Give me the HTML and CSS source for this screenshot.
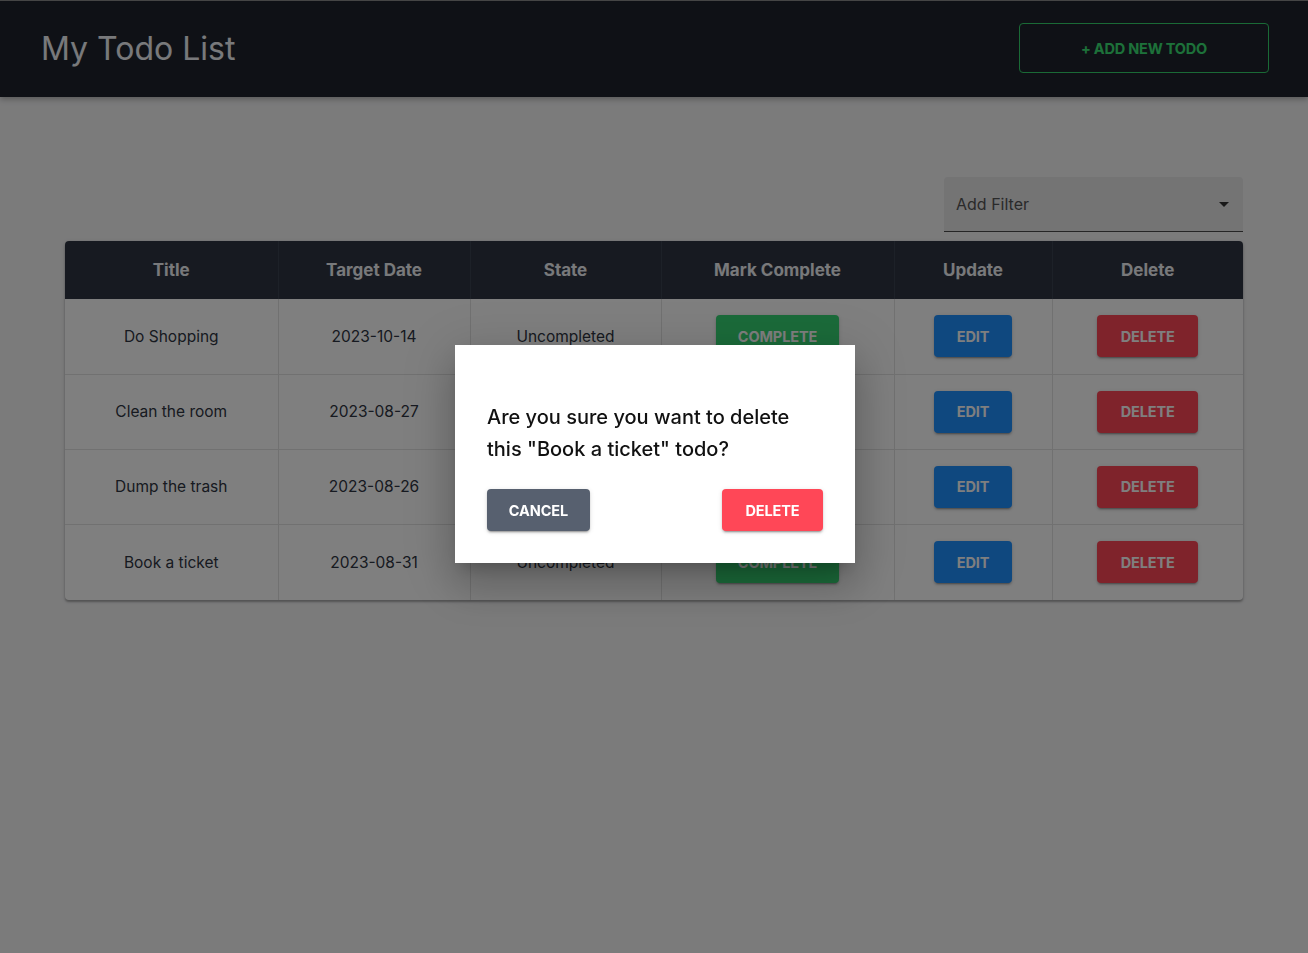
FILE: index.html
```html
<!DOCTYPE html>
<html>
<head>
<meta charset="utf-8">
<title>My Todo List</title>
<link rel="stylesheet" href="styles.css">
</head>
<body>
<header class="navbar">
  <h1 class="brand">My Todo List</h1>
  <button class="btn-outline">+ ADD NEW TODO</button>
</header>
<main class="content">
  <div class="filter-row">
    <div class="filter">
      <span class="filter-label">Add Filter</span>
      <svg class="caret" width="10" height="5" viewBox="0 0 10 5"><path d="M0 0 L10 0 L5 5 Z" fill="#333"/></svg>
    </div>
  </div>
  <div class="table-wrap">
    <table class="todo-table">
      <colgroup>
        <col style="width:213px"><col style="width:192px"><col style="width:191px"><col style="width:233px"><col style="width:158px"><col style="width:191px">
      </colgroup>
      <thead>
        <tr><th>Title</th><th>Target Date</th><th>State</th><th>Mark Complete</th><th>Update</th><th>Delete</th></tr>
      </thead>
      <tbody>
        <tr><td>Do Shopping</td><td>2023-10-14</td><td>Uncompleted</td><td><button class="btn btn-green">COMPLETE</button></td><td><button class="btn btn-blue">EDIT</button></td><td><button class="btn btn-red">DELETE</button></td></tr>
        <tr><td>Clean the room</td><td>2023-08-27</td><td>Uncompleted</td><td><button class="btn btn-green">COMPLETE</button></td><td><button class="btn btn-blue">EDIT</button></td><td><button class="btn btn-red">DELETE</button></td></tr>
        <tr><td>Dump the trash</td><td>2023-08-26</td><td>Uncompleted</td><td><button class="btn btn-green">COMPLETE</button></td><td><button class="btn btn-blue">EDIT</button></td><td><button class="btn btn-red">DELETE</button></td></tr>
        <tr><td>Book a ticket</td><td>2023-08-31</td><td>Uncompleted</td><td><button class="btn btn-green">COMPLETE</button></td><td><button class="btn btn-blue">EDIT</button></td><td><button class="btn btn-red">DELETE</button></td></tr>
      </tbody>
    </table>
  </div>
</main>
<div class="backdrop"></div>
<div class="modal">
  <p class="modal-text">Are you sure you want to delete this "Book a ticket" todo?</p>
  <div class="modal-actions">
    <button class="btn btn-gray">CANCEL</button>
    <button class="btn btn-red modal-del">DELETE</button>
  </div>
</div>
</body>
</html>
```
FILE: styles.css
```css
* { box-sizing: border-box; }
html, body { margin: 0; padding: 0; }
body {
  background: #f6f6f7;
  font-family: Inter, "Noto Sans", "Liberation Sans", sans-serif;
  color: #2f3542;
  min-height: 953px;
}
.navbar {
  height: 97px;
  background: #1e232d;
  border-top: 1px solid #8a8a8a;
  display: flex;
  align-items: center;
  justify-content: space-between;
  padding: 0 39px 0 41px;
  box-shadow: 0 2px 6px rgba(0,0,0,0.3);
}
.brand {
  margin: 0 0 2px 0;
  font-weight: 400;
  font-size: 32px;
  color: #f1f2f6;
  letter-spacing: 0;
}
.btn-outline {
  width: 250px;
  height: 50px;
  background: transparent;
  border: 1px solid #34d46c;
  border-radius: 4px;
  color: #3ae374;
  font-family: inherit;
  font-weight: 700;
  font-size: 14.5px;
  letter-spacing: -0.2px;
  margin-top: -2px;
}
.content {
  padding: 80px 65px 0 65px;
}
.filter-row {
  display: flex;
  justify-content: flex-end;
}
.filter {
  width: 299px;
  height: 55px;
  background: #e8e8e9;
  border-bottom: 1px solid #4a4a4a;
  border-radius: 4px 4px 0 0;
  display: flex;
  align-items: center;
  justify-content: space-between;
  padding: 0 14px 0 12px;
}
.filter-label {
  font-size: 16px;
  color: #555;
}
.table-wrap {
  margin-top: 9px;
  border-radius: 4px;
  overflow: hidden;
  background: #fff;
  box-shadow: 0 2px 2px rgba(0,0,0,0.25), 0 1px 4px rgba(0,0,0,0.15);
}
.todo-table {
  width: 100%;
  border-collapse: collapse;
  table-layout: fixed;
}
.todo-table th {
  height: 58px;
  background: #2f3542;
  color: #f1f2f6;
  font-size: 17px;
  font-weight: 700;
  text-align: center;
  border-right: 1px solid #3b4250;
}
.todo-table td {
  height: 75px;
  text-align: center;
  font-size: 15.5px;
  color: #2f3542;
  border-right: 1px solid #e2e2e2;
  border-top: 1px solid #e2e2e2;
}
.todo-table tbody tr:first-child td { border-top: none; }
.todo-table tbody tr:last-child td { height: 76px; }
.todo-table th:last-child, .todo-table td:last-child { border-right: none; }
.btn {
  height: 42px;
  border: none;
  border-radius: 4px;
  color: #fff;
  font-family: inherit;
  font-weight: 700;
  font-size: 14.5px;
  letter-spacing: -0.1px;
  box-shadow: 0 3px 1px -2px rgba(0,0,0,0.2), 0 2px 2px rgba(0,0,0,0.14), 0 1px 5px rgba(0,0,0,0.12);
  vertical-align: middle;
}
.btn-green { background: #36d674; width: 123px; }
.btn-blue { background: #1e90ff; width: 78px; }
.btn-red { background: #ff4757; width: 101px; }
.btn-gray { background: #57606f; width: 103px; }
.backdrop {
  position: fixed;
  inset: 0;
  background: rgba(0,0,0,0.5);
}
.modal {
  position: absolute;
  top: 345px;
  left: 455px;
  width: 400px;
  height: 218px;
  background: #fff;
  padding: 56px 32px 32px 32px;
  box-shadow: 0 11px 15px -7px rgba(0,0,0,0.2), 0 24px 38px 3px rgba(0,0,0,0.14), 0 9px 46px 8px rgba(0,0,0,0.12);
}
.modal-text {
  margin: 0;
  font-size: 20px;
  line-height: 32px;
  font-weight: 500;
  color: #111;
}
.modal-actions {
  margin-top: 24px;
  display: flex;
  justify-content: space-between;
}
```
